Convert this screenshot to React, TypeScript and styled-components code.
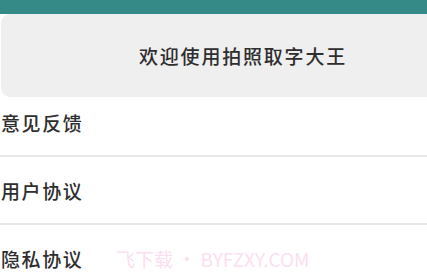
import React from 'react';
import styled, { createGlobalStyle } from 'styled-components';

const GlobalStyle = createGlobalStyle`
  html, body {
    margin: 0;
    padding: 0;
    background: #ffffff;
  }
  body {
    font-family: "Noto Sans CJK SC", "Noto Sans", sans-serif;
  }
`;

const Page = styled.div`
  width: 427px;
  height: 280px;
  overflow: hidden;
  background: #ffffff;
  display: flex;
  flex-direction: column;
`;

const TopBar = styled.div`
  height: 14px;
  flex-shrink: 0;
  background: #358a87;
`;

const WelcomeCard = styled.div`
  height: 83px;
  flex-shrink: 0;
  margin-left: 1px;
  margin-right: -20px;
  margin-bottom: -8px;
  background: #f0eff0;
  border-radius: 9px 0 0 9px;
  display: flex;
  align-items: center;
  padding-left: 138px;
  box-sizing: border-box;
  font-size: 19px;
  font-weight: 500;
  letter-spacing: 1.8px;
  color: #2e2e2e;
  position: relative;
  z-index: 1;
`;

const MenuList = styled.ul`
  list-style: none;
  margin: 0;
  padding: 0;
`;

const MenuRow = styled.li<{ $divider?: boolean }>`
  height: 66px;
  display: flex;
  align-items: center;
  padding-left: 1px;
  font-size: 19px;
  font-weight: 500;
  letter-spacing: 1.6px;
  color: #2e2e2e;
  border-bottom: ${p => (p.$divider ? '2px solid #e8e8e8' : 'none')};
  position: relative;
`;

const Watermark = styled.span`
  position: absolute;
  left: 116px;
  top: 50%;
  transform: translateY(-50%);
  font-size: 19px;
  font-weight: 400;
  letter-spacing: 0;
  color: #fadff1;
  white-space: nowrap;
`;

const items = [
  { label: '意见反馈', divider: true },
  { label: '用户协议', divider: true },
  { label: '隐私协议', divider: false, mark: true },
];

export default function App() {
  return (
    <Page>
      <GlobalStyle />
      <TopBar />
      <WelcomeCard>欢迎使用拍照取字大王</WelcomeCard>
      <MenuList>
        {items.map(item => (
          <MenuRow key={item.label} $divider={item.divider}>
            {item.label}
            {item.mark && <Watermark>飞下载 • BYFZXY.COM</Watermark>}
          </MenuRow>
        ))}
      </MenuList>
    </Page>
  );
}
